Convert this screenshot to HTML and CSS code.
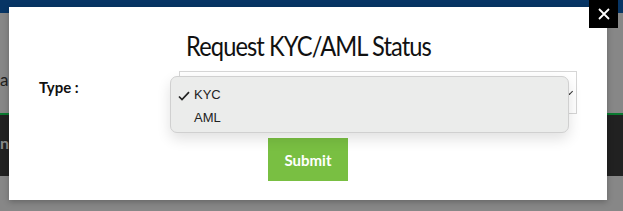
FILE: index.html
```html
<!DOCTYPE html>
<html lang="en">
<head>
    <meta charset="UTF-8">
    <title>Request KYC/AML Status</title>
    <link rel="stylesheet" href="styles.css">
</head>
<body>
    <div class="page">
        <div class="topbar"></div>
        <div class="page-text">ar</div>
        <div class="band"><span>ng</span></div>

        <div class="modal">
            <h2 class="modal-title"><span>Request KYC/AML Status</span></h2>
            <div class="form-row">
                <label class="form-label">Type :</label>
                <div class="select-wrap">
                    <div class="select-box"><span class="chevron"></span></div>
                    <ul class="dropdown">
                        <li class="selected">
                            <svg class="check" width="12" height="10" viewBox="0 0 12 10">
                                <path d="M1 5.5 L4 8.5 L11 1.2" stroke="#222" stroke-width="1.7" fill="none"/>
                            </svg>KYC
                        </li>
                        <li>AML</li>
                    </ul>
                </div>
            </div>
            <div class="actions">
                <button class="btn-submit">Submit</button>
            </div>
        </div>

        <button class="modal-close" aria-label="Close">
            <svg width="12" height="12" viewBox="0 0 12 12">
                <path d="M1 1 L11 11 M11 1 L1 11" stroke="#fff" stroke-width="1.8" fill="none"/>
            </svg>
        </button>
    </div>
</body>
</html>
```

FILE: styles.css
```css
body {
    margin: 0;
    font-family: 'Lato', 'Open Sans', sans-serif;
}
.page {
    position: relative;
    height: 211px;
    overflow: hidden;
    background: #878787;
}
.topbar {
    height: 13px;
    background: #073565;
}
.page-text {
    margin-top: 56px;
    height: 44px;
    font-size: 17px;
    color: #1e1e1e;
}
.band {
    height: 61px;
    background: #212121;
    border-top: 2px solid #0a7a30;
    color: #8a8a8a;
    font-size: 16px;
    font-weight: bold;
    line-height: 56px;
}
.modal {
    position: absolute;
    left: 9px;
    top: 7px;
    width: 598px;
    height: 193px;
    background: #fff;
    box-shadow: 0 2px 6px rgba(0, 0, 0, 0.25);
    padding: 0 30px;
    box-sizing: border-box;
}
.modal-title {
    margin: 24px 0 0;
    font-size: 26px;
    font-weight: normal;
    text-align: center;
    color: #111;
    line-height: 30px;
    white-space: nowrap;
}
.modal-title span {
    display: inline-block;
    letter-spacing: -1px;
    transform: scaleX(0.91);
}
.form-row {
    display: flex;
    margin-top: 10px;
}
.form-label {
    width: 140px;
    font-size: 15px;
    font-weight: bold;
    color: #111;
    padding-top: 7px;
}
.select-wrap {
    position: relative;
    flex: 1;
}
.select-box {
    height: 43px;
    border: 1px solid #d6d6d6;
    box-sizing: border-box;
    position: relative;
}
.chevron {
    position: absolute;
    right: 4px;
    top: 17px;
    width: 4px;
    height: 4px;
    border-right: 1.5px solid #333;
    border-bottom: 1.5px solid #333;
    transform: rotate(45deg);
}
.dropdown {
    position: absolute;
    left: -9px;
    top: 5px;
    width: 399px;
    height: 57px;
    margin: 0;
    padding: 6px 0 0;
    list-style: none;
    box-sizing: border-box;
    background: #ebeceb;
    border: 1px solid #d0d0d0;
    border-radius: 7px;
    box-shadow: 0 6px 14px rgba(0, 0, 0, 0.12);
    font-family: 'Liberation Sans', Arial, sans-serif;
    font-size: 13px;
    color: #222;
}
.dropdown li {
    height: 23px;
    line-height: 23px;
    padding-left: 23px;
    position: relative;
}
.check {
    position: absolute;
    left: 7px;
    top: 8px;
}
.actions {
    text-align: center;
    margin-top: 24px;
}
.btn-submit {
    width: 80px;
    height: 43px;
    border: none;
    background: #79bf42;
    color: #fff;
    font-family: 'Lato', sans-serif;
    font-size: 15px;
    font-weight: bold;
    cursor: pointer;
}
.modal-close {
    position: absolute;
    left: 589px;
    top: 0;
    width: 29px;
    height: 28px;
    border: none;
    padding: 0;
    background: #000;
    display: flex;
    align-items: center;
    justify-content: center;
}
```
